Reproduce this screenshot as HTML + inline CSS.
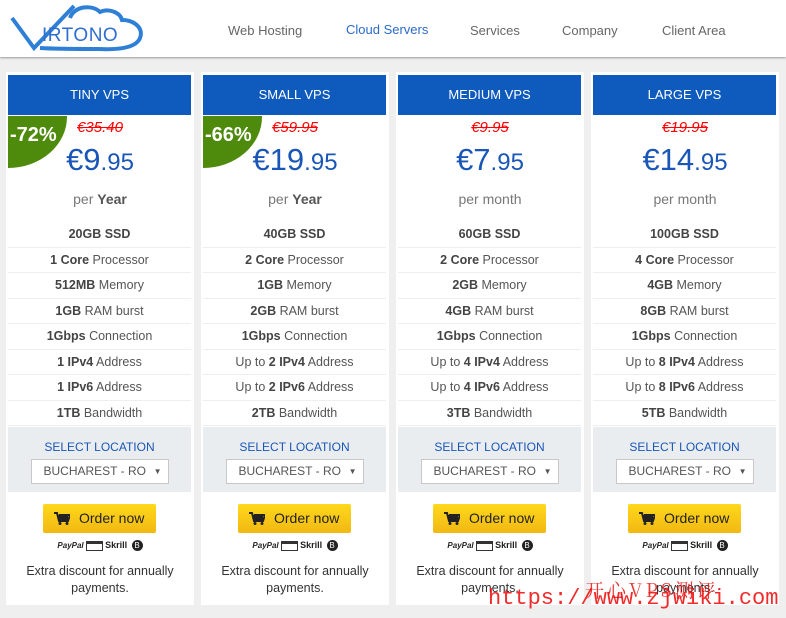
<!DOCTYPE html>
<html><head><meta charset="utf-8"><style>
*{margin:0;padding:0;box-sizing:border-box}
body{width:786px;height:618px;overflow:hidden;background:#efefef;font-family:"Liberation Sans",sans-serif;position:relative}
.hdr{position:absolute;left:0;top:0;width:786px;height:57px;background:#fff;box-shadow:0 1px 2px #999}
.nav{position:absolute;top:23px;font-size:13px;color:#666}
.card{position:absolute;top:72px;width:188px;height:533px;background:#fff}
.ch{position:absolute;left:2px;top:3px;width:183px;height:40px;background:#0f5bbd;color:#fff;font-size:13px;text-align:center;line-height:40px}
.badge{position:absolute;left:2px;top:44px;width:59px;height:52px;background:#4e8a0c;border-bottom-right-radius:60px 52px;color:#fff;font-size:20px;padding:8px 0 0 2px;font-weight:bold}
.old{position:absolute;left:0;width:188px;top:47px;text-align:center;color:#f00;font-size:15px;font-style:italic;text-decoration:line-through}
.price{position:absolute;left:0;width:188px;top:70px;text-align:center;color:#1a56b8;font-size:31px}
.price small{font-size:24px}
.per{position:absolute;left:0;width:188px;top:119px;text-align:center;color:#777;font-size:14px}
.per b{color:#555}
.rows{position:absolute;left:2px;top:150px;width:183px}
.r{height:25.5px;border-bottom:1px solid #eee;text-align:center;font-size:12.5px;color:#555;line-height:25px}
.r b{color:#444}
.loc{position:absolute;left:2px;top:355px;width:183px;height:65px;background:#eaedef;text-align:center}
.loc .t{color:#1a56b8;font-size:12px;margin-top:13px}
.sel{margin:5px auto 0;width:138px;height:25px;border:1px solid #c8c8c8;background:#fff;font-size:12px;color:#555;line-height:23px;text-align:left;padding-left:12px;position:relative}
.sel:after{content:"▼";position:absolute;right:6px;top:0;font-size:8px;color:#555}
.btn{position:absolute;left:37px;top:432px;width:113px;height:29px;background:linear-gradient(#ffd81c,#f1b812);border-radius:2px;font-size:14px;color:#222;line-height:29px;padding-left:36px}
.cart{position:absolute;left:11px;top:8px}
.pay{position:absolute;left:0;width:188px;top:468px;text-align:center;font-size:8px;color:#222}
.ext{position:absolute;left:0;width:188px;top:491px;text-align:center;font-size:12.5px;color:#333;line-height:17px}
</style></head><body>
<div class="hdr">
<svg style="position:absolute;left:8px;top:2px" width="140" height="50" viewBox="0 0 140 50">
<path d="M62 16 C66 4 84 2 92 10 C100 6 112 10 114 18 C126 18 136 26 132 36 C128 46 110 48 90 47 C70 47 48 47 32 46" fill="none" stroke="#2e7fd6" stroke-width="4"/>
<path d="M4 16 L26 46 L66 4" fill="none" stroke="#2e7fd6" stroke-width="4"/>
<text x="34" y="39" font-family="Liberation Sans" font-size="19" fill="#2e6ed0" letter-spacing="0.5">IRTONO</text>
</svg>
<div class="nav" style="left:228px">Web Hosting</div>
<div class="nav" style="left:346px;top:22px;color:#2a6ac8">Cloud Servers</div>
<div class="nav" style="left:470px">Services</div>
<div class="nav" style="left:562px">Company</div>
<div class="nav" style="left:662px">Client Area</div>
</div>

<div class="card" style="left:6px"><div class="ch">TINY VPS</div><div class="badge">-72%</div><div class="old">€35.40</div><div class="price">€9<small>.95</small></div><div class="per">per <b>Year</b></div>
<div class="rows"><div class="r"><b>20GB SSD</b></div><div class="r"><b>1 Core</b> Processor</div><div class="r"><b>512MB</b> Memory</div><div class="r"><b>1GB</b> RAM burst</div><div class="r"><b>1Gbps</b> Connection</div><div class="r"><b>1 IPv4</b> Address</div><div class="r"><b>1 IPv6</b> Address</div><div class="r"><b>1TB</b> Bandwidth</div></div>
<div class="loc"><div class="t">SELECT LOCATION</div><div class="sel">BUCHAREST - RO</div></div>
<div class="btn"><svg class="cart" width="16" height="13" viewBox="0 0 16 13"><path d="M0 1h3l2 8h9l2-6H5" fill="none" stroke="#222" stroke-width="2"/><rect x="4" y="3" width="10" height="5" fill="#222"/><circle cx="6" cy="11.5" r="1.5" fill="#222"/><circle cx="13" cy="11.5" r="1.5" fill="#222"/></svg>Order now</div>
<div class="pay"><i><b>PayPal</b></i> <span style="display:inline-block;width:17px;height:10px;border:1px solid #333;border-top:3px solid #333;vertical-align:middle"></span> <b style="font-size:9px">Skrill</b> &nbsp;<span style="display:inline-block;width:11px;height:11px;border-radius:50%;background:#222;color:#fff;font-size:8px;line-height:11px;vertical-align:middle">B</span></div>
<div class="ext">Extra discount for annually<br>payments.</div></div>

<div class="card" style="left:201px"><div class="ch">SMALL VPS</div><div class="badge">-66%</div><div class="old">€59.95</div><div class="price">€19<small>.95</small></div><div class="per">per <b>Year</b></div>
<div class="rows"><div class="r"><b>40GB SSD</b></div><div class="r"><b>2 Core</b> Processor</div><div class="r"><b>1GB</b> Memory</div><div class="r"><b>2GB</b> RAM burst</div><div class="r"><b>1Gbps</b> Connection</div><div class="r">Up to <b>2 IPv4</b> Address</div><div class="r">Up to <b>2 IPv6</b> Address</div><div class="r"><b>2TB</b> Bandwidth</div></div>
<div class="loc"><div class="t">SELECT LOCATION</div><div class="sel">BUCHAREST - RO</div></div>
<div class="btn"><svg class="cart" width="16" height="13" viewBox="0 0 16 13"><path d="M0 1h3l2 8h9l2-6H5" fill="none" stroke="#222" stroke-width="2"/><rect x="4" y="3" width="10" height="5" fill="#222"/><circle cx="6" cy="11.5" r="1.5" fill="#222"/><circle cx="13" cy="11.5" r="1.5" fill="#222"/></svg>Order now</div>
<div class="pay"><i><b>PayPal</b></i> <span style="display:inline-block;width:17px;height:10px;border:1px solid #333;border-top:3px solid #333;vertical-align:middle"></span> <b style="font-size:9px">Skrill</b> &nbsp;<span style="display:inline-block;width:11px;height:11px;border-radius:50%;background:#222;color:#fff;font-size:8px;line-height:11px;vertical-align:middle">B</span></div>
<div class="ext">Extra discount for annually<br>payments.</div></div>

<div class="card" style="left:396px"><div class="ch">MEDIUM VPS</div><div class="old">€9.95</div><div class="price">€7<small>.95</small></div><div class="per">per month</div>
<div class="rows"><div class="r"><b>60GB SSD</b></div><div class="r"><b>2 Core</b> Processor</div><div class="r"><b>2GB</b> Memory</div><div class="r"><b>4GB</b> RAM burst</div><div class="r"><b>1Gbps</b> Connection</div><div class="r">Up to <b>4 IPv4</b> Address</div><div class="r">Up to <b>4 IPv6</b> Address</div><div class="r"><b>3TB</b> Bandwidth</div></div>
<div class="loc"><div class="t">SELECT LOCATION</div><div class="sel">BUCHAREST - RO</div></div>
<div class="btn"><svg class="cart" width="16" height="13" viewBox="0 0 16 13"><path d="M0 1h3l2 8h9l2-6H5" fill="none" stroke="#222" stroke-width="2"/><rect x="4" y="3" width="10" height="5" fill="#222"/><circle cx="6" cy="11.5" r="1.5" fill="#222"/><circle cx="13" cy="11.5" r="1.5" fill="#222"/></svg>Order now</div>
<div class="pay"><i><b>PayPal</b></i> <span style="display:inline-block;width:17px;height:10px;border:1px solid #333;border-top:3px solid #333;vertical-align:middle"></span> <b style="font-size:9px">Skrill</b> &nbsp;<span style="display:inline-block;width:11px;height:11px;border-radius:50%;background:#222;color:#fff;font-size:8px;line-height:11px;vertical-align:middle">B</span></div>
<div class="ext">Extra discount for annually<br>payments.</div></div>

<div class="card" style="left:591px"><div class="ch">LARGE VPS</div><div class="old">€19.95</div><div class="price">€14<small>.95</small></div><div class="per">per month</div>
<div class="rows"><div class="r"><b>100GB SSD</b></div><div class="r"><b>4 Core</b> Processor</div><div class="r"><b>4GB</b> Memory</div><div class="r"><b>8GB</b> RAM burst</div><div class="r"><b>1Gbps</b> Connection</div><div class="r">Up to <b>8 IPv4</b> Address</div><div class="r">Up to <b>8 IPv6</b> Address</div><div class="r"><b>5TB</b> Bandwidth</div></div>
<div class="loc"><div class="t">SELECT LOCATION</div><div class="sel">BUCHAREST - RO</div></div>
<div class="btn"><svg class="cart" width="16" height="13" viewBox="0 0 16 13"><path d="M0 1h3l2 8h9l2-6H5" fill="none" stroke="#222" stroke-width="2"/><rect x="4" y="3" width="10" height="5" fill="#222"/><circle cx="6" cy="11.5" r="1.5" fill="#222"/><circle cx="13" cy="11.5" r="1.5" fill="#222"/></svg>Order now</div>
<div class="pay"><i><b>PayPal</b></i> <span style="display:inline-block;width:17px;height:10px;border:1px solid #333;border-top:3px solid #333;vertical-align:middle"></span> <b style="font-size:9px">Skrill</b> &nbsp;<span style="display:inline-block;width:11px;height:11px;border-radius:50%;background:#222;color:#fff;font-size:8px;line-height:11px;vertical-align:middle">B</span></div>
<div class="ext">Extra discount for annually<br>payments.</div></div>

<div style="position:absolute;left:585px;top:576px;font-family:'Noto Serif CJK SC',serif;color:rgba(230,20,20,.85);font-size:19px;letter-spacing:3px">开心VPS测评</div>
<div style="position:absolute;left:488px;top:586px;font-family:'Liberation Mono',monospace;color:rgba(240,20,20,.9);font-size:22px">https://www.zjwiki.com</div>
</body></html>
